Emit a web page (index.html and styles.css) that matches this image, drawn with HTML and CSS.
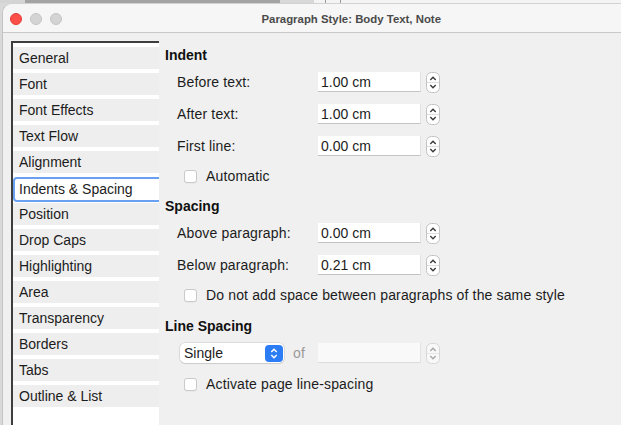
FILE: index.html
```html
<!DOCTYPE html>
<html>
<head>
<meta charset="utf-8">
<link rel="stylesheet" href="styles.css">
</head>
<body>
<div class="desk">
  <span class="seg seg-a"></span>
  <span class="seg seg-b"></span>
  <span class="seg seg-c"></span>
  <span class="seg seg-d"></span>
  <span class="seg seg-e"></span>
  <span class="seg seg-f"></span>
</div>
<div class="window">
  <div class="titlebar">
    <div class="lights">
      <span class="light close"></span>
      <span class="light"></span>
      <span class="light"></span>
    </div>
    <div class="title">Paragraph Style: Body Text, Note</div>
  </div>
  <div class="content">
    <ul class="tabs">
      <li class="tab">General</li>
      <li class="tab">Font</li>
      <li class="tab">Font Effects</li>
      <li class="tab">Text Flow</li>
      <li class="tab">Alignment</li>
      <li class="tab selected">Indents &amp; Spacing</li>
      <li class="tab">Position</li>
      <li class="tab">Drop Caps</li>
      <li class="tab">Highlighting</li>
      <li class="tab">Area</li>
      <li class="tab">Transparency</li>
      <li class="tab">Borders</li>
      <li class="tab">Tabs</li>
      <li class="tab">Outline &amp; List</li>
    </ul>
    <div class="panel">
      <section class="group">
        <h2 class="heading">Indent</h2>
        <div class="row">
          <span class="label">Before text:</span>
          <span class="field">1.00 cm</span>
          <svg class="spin" width="14" height="21" viewBox="0 0 14 21"><rect x="0.5" y="0.5" width="13" height="20" rx="5" fill="#fff" stroke="#c2c2c2"/><line x1="1" y1="10.5" x2="13" y2="10.5" stroke="#dedede"/><path d="M4.3 8 L7 5.3 L9.7 8" fill="none" stroke="#3a3a3a" stroke-width="1.4"/><path d="M4.3 13 L7 15.7 L9.7 13" fill="none" stroke="#3a3a3a" stroke-width="1.4"/></svg>
        </div>
        <div class="row">
          <span class="label">After text:</span>
          <span class="field">1.00 cm</span>
          <svg class="spin" width="14" height="21" viewBox="0 0 14 21"><rect x="0.5" y="0.5" width="13" height="20" rx="5" fill="#fff" stroke="#c2c2c2"/><line x1="1" y1="10.5" x2="13" y2="10.5" stroke="#dedede"/><path d="M4.3 8 L7 5.3 L9.7 8" fill="none" stroke="#3a3a3a" stroke-width="1.4"/><path d="M4.3 13 L7 15.7 L9.7 13" fill="none" stroke="#3a3a3a" stroke-width="1.4"/></svg>
        </div>
        <div class="row">
          <span class="label">First line:</span>
          <span class="field">0.00 cm</span>
          <svg class="spin" width="14" height="21" viewBox="0 0 14 21"><rect x="0.5" y="0.5" width="13" height="20" rx="5" fill="#fff" stroke="#c2c2c2"/><line x1="1" y1="10.5" x2="13" y2="10.5" stroke="#dedede"/><path d="M4.3 8 L7 5.3 L9.7 8" fill="none" stroke="#3a3a3a" stroke-width="1.4"/><path d="M4.3 13 L7 15.7 L9.7 13" fill="none" stroke="#3a3a3a" stroke-width="1.4"/></svg>
        </div>
        <div class="check-row">
          <span class="checkbox"></span>
          <span class="check-label">Automatic</span>
        </div>
      </section>
      <section class="group">
        <h2 class="heading">Spacing</h2>
        <div class="row">
          <span class="label">Above paragraph:</span>
          <span class="field">0.00 cm</span>
          <svg class="spin" width="14" height="21" viewBox="0 0 14 21"><rect x="0.5" y="0.5" width="13" height="20" rx="5" fill="#fff" stroke="#c2c2c2"/><line x1="1" y1="10.5" x2="13" y2="10.5" stroke="#dedede"/><path d="M4.3 8 L7 5.3 L9.7 8" fill="none" stroke="#3a3a3a" stroke-width="1.4"/><path d="M4.3 13 L7 15.7 L9.7 13" fill="none" stroke="#3a3a3a" stroke-width="1.4"/></svg>
        </div>
        <div class="row">
          <span class="label">Below paragraph:</span>
          <span class="field">0.21 cm</span>
          <svg class="spin" width="14" height="21" viewBox="0 0 14 21"><rect x="0.5" y="0.5" width="13" height="20" rx="5" fill="#fff" stroke="#c2c2c2"/><line x1="1" y1="10.5" x2="13" y2="10.5" stroke="#dedede"/><path d="M4.3 8 L7 5.3 L9.7 8" fill="none" stroke="#3a3a3a" stroke-width="1.4"/><path d="M4.3 13 L7 15.7 L9.7 13" fill="none" stroke="#3a3a3a" stroke-width="1.4"/></svg>
        </div>
        <div class="check-row">
          <span class="checkbox"></span>
          <span class="check-label">Do not add space between paragraphs of the same style</span>
        </div>
      </section>
      <section class="group group-last">
        <h2 class="heading">Line Spacing</h2>
        <div class="row select-row">
          <span class="select">
            <span class="select-text">Single</span>
            <svg class="select-btn" width="18" height="17" viewBox="0 0 18 17"><rect x="0" y="0" width="18" height="17" rx="4" fill="#2c7cf6"/><path d="M6.3 7 L9 4.3 L11.7 7" fill="none" stroke="#fff" stroke-width="1.5"/><path d="M6.3 10 L9 12.7 L11.7 10" fill="none" stroke="#fff" stroke-width="1.5"/></svg>
          </span>
          <span class="of">of</span>
          <span class="field disabled"></span>
          <svg class="spin" width="14" height="21" viewBox="0 0 14 21"><rect x="0.5" y="0.5" width="13" height="20" rx="5" fill="#f8f8f8" stroke="#d6d6d6"/><line x1="1" y1="10.5" x2="13" y2="10.5" stroke="#e6e6e6"/><path d="M4.3 8 L7 5.3 L9.7 8" fill="none" stroke="#a8a8a8" stroke-width="1.4"/><path d="M4.3 13 L7 15.7 L9.7 13" fill="none" stroke="#a8a8a8" stroke-width="1.4"/></svg>
        </div>
        <div class="check-row">
          <span class="checkbox"></span>
          <span class="check-label">Activate page line-spacing</span>
        </div>
      </section>
    </div>
  </div>
</div>
</body>
</html>
```

FILE: styles.css
```css
* { box-sizing: border-box; }
html, body {
  margin: 0;
  padding: 0;
  width: 621px;
  height: 425px;
  overflow: hidden;
  background: #d9d9d9;
  font-family: "Liberation Sans", Arial, sans-serif;
  color: #1c1c1c;
}
.desk {
  display: flex;
  height: 3px;
}
.seg { display: block; height: 100%; }
.seg-a { width: 25px; background: #d4d4d4; }
.seg-b { width: 255px; background: #a3a3a3; }
.seg-c { width: 34px; background: #d8d8d8; }
.seg-d { width: 12px; background: #f4f4f4; border-right: 1px solid #9a9a9a; }
.seg-e { width: 15px; background: #f4f4f4; border-right: 1px solid #9a9a9a; }
.seg-f { flex: 1; background: #f4f4f4; }

.window {
  margin-left: 2px;
  width: 619px;
  height: 422px;
  background: #f0f0f0;
  border-left: 1px solid #c3c3c3;
  border-top: 1px solid #d2d2d2;
  border-top-left-radius: 10px;
  overflow: hidden;
  display: flex;
  flex-direction: column;
}
.titlebar {
  height: 29px;
  flex: none;
  background: #f6f6f6;
  border-bottom: 1px solid #c9c9c9;
  display: flex;
  align-items: center;
  justify-content: space-between;
  padding-right: 180px;
}
.lights {
  display: flex;
  gap: 8px;
  padding-left: 7px;
  padding-top: 1px;
}
.light {
  width: 12px;
  height: 12px;
  border-radius: 50%;
  background: #d4d4d4;
  border: 1px solid #c4c4c4;
}
.light.close {
  background: #fd4f4a;
  border-color: #e33b36;
}
.title {
  font-size: 11.4px;
  font-weight: bold;
  color: #4a4a4a;
  padding-top: 1px;
  white-space: nowrap;
}

.content {
  flex: 1;
  display: flex;
  align-items: flex-start;
  min-width: 0;
}
.tabs {
  list-style: none;
  margin: 8px 0 0 8px;
  padding: 4px 0 40px 0;
  width: 148px;
  background: #ffffff;
  border-left: 2px solid #3d3d3d;
  border-top: 2px solid #3d3d3d;
  overflow: hidden;
  flex: none;
}
.tab {
  height: 22px;
  margin-bottom: 4px;
  background: #eeeeee;
  font-size: 14px;
  line-height: 22px;
  padding-left: 6px;
  white-space: nowrap;
}
.tab.selected {
  height: 25px;
  margin-bottom: 1px;
  background: #ffffff;
  border: 2px solid #6aa0f2;
  border-radius: 4px;
  margin-right: -6px;
  line-height: 20px;
  padding-left: 4px;
}

.panel {
  flex: 1;
  min-width: 0;
  padding: 14px 0 0 6px;
  letter-spacing: 0.15px;
}
.group + .group { margin-top: 14px; }
.group-last { margin-top: 15px !important; }
.heading {
  margin: 0;
  font-size: 14px;
  font-weight: bold;
  line-height: 16px;
  height: 16px;
  color: #111;
  letter-spacing: 0;
}
.row {
  display: flex;
  align-items: center;
  height: 20px;
  margin-top: 12px;
  padding-left: 12px;
  font-size: 14px;
}
.heading + .row { margin-top: 9px; }
.label {
  width: 141px;
  flex: none;
  white-space: nowrap;
}
.field {
  width: 103px;
  height: 20px;
  background: #ffffff;
  border-bottom: 1px solid #c4c4c4;
  border-right: 1px solid #e2e2e2;
  padding-left: 3px;
  line-height: 20px;
  flex: none;
  letter-spacing: 0;
}
.field.disabled {
  background: #f9f9f9;
  border-bottom-color: #dcdcdc;
}
.spin {
  margin-left: 5px;
  flex: none;
  display: block;
}
.check-row {
  display: flex;
  align-items: center;
  height: 16px;
  margin-top: 12px;
  padding-left: 19px;
  font-size: 14px;
}
.group-last .check-row { margin-top: 13px; }
.checkbox {
  width: 13px;
  height: 13px;
  border: 1px solid #c9c9c9;
  border-radius: 3px;
  background: #ffffff;
  box-shadow: 0 0.5px 0 rgba(0,0,0,0.06);
  flex: none;
}
.check-label {
  margin-left: 9px;
  white-space: nowrap;
}
.select-row { padding-left: 15px; }
.select {
  width: 104px;
  height: 20px;
  background: #ffffff;
  border-radius: 5px;
  box-shadow: 0 0 0 0.5px #c6c6c6, 0 1px 1px rgba(0,0,0,0.12);
  display: flex;
  align-items: center;
  justify-content: space-between;
  padding: 0 1px 0 4px;
  flex: none;
  letter-spacing: 0;
}
.select-text { font-size: 14px; }
.select-btn { display: block; }
.of {
  width: 34px;
  padding-left: 9px;
  color: #9a9a9a;
  flex: none;
}
```
